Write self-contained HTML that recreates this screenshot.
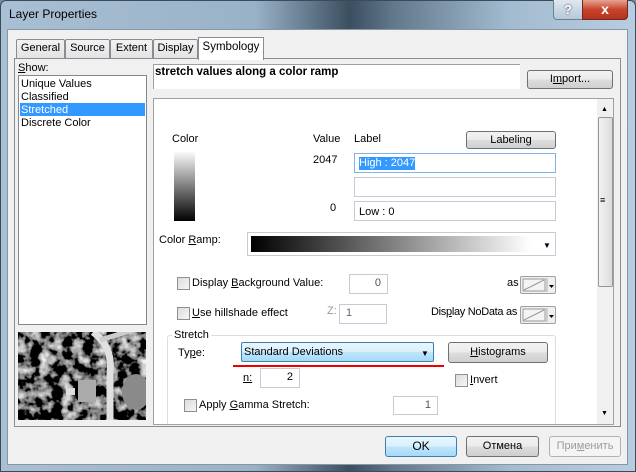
<!DOCTYPE html><html><head><meta charset="utf-8"><style>
*{box-sizing:border-box;margin:0;padding:0}
body{width:636px;height:472px;overflow:hidden;font-family:"Liberation Sans",sans-serif;font-size:11px;color:#000;position:relative;background:#7a8c9c}
.a{position:absolute}
.t{position:absolute;white-space:nowrap;line-height:13px}
.btn{position:absolute;border:1px solid #707070;border-radius:3px;background:linear-gradient(#f2f2f2 0,#ebebeb 50%,#dddddd 51%,#cfcfcf 100%);text-align:center;line-height:17px}
.in{position:absolute;border:1px solid #c5ccd6;background:#fff;text-align:right;padding-right:6px;line-height:17px}
.cb{position:absolute;width:13px;height:13px;border:1px solid #8f8f8f;background:linear-gradient(135deg,#dcdcdc,#f6f6f6)}
.dd{position:absolute;border:1px solid #a0a0a0;background:#f0f0f0;border-radius:2px}
u{text-decoration:underline}
</style></head><body>
<div class="a" style="left:0;top:0;width:636px;height:472px;border-radius:6px 6px 0 0;background:linear-gradient(90deg,#a8bfd4 0%,#9ab2c8 40%,#3b4f60 55%,#62798c 62%,#a3bbd0 80%,#b8cde0 100%);border:1px solid #3c4b58"></div>
<div class="t" style="left:9px;top:8px;font-size:12px;color:#000">Layer Properties</div>
<div class="a" style="left:553px;top:0;width:30px;height:20px;border:1px solid #6b7f93;border-top:0;border-radius:0 0 0 4px;background:linear-gradient(#dfe8f1,#b6c8d9);color:#fff;text-align:center;font-weight:bold;font-size:13px;line-height:19px;text-shadow:0 0 2px #334">?</div>
<div class="a" style="left:582px;top:0;width:46px;height:20px;border:1px solid #6b2a22;border-top:0;border-radius:0 0 4px 0;background:linear-gradient(#e8a493,#c7442c 50%,#b8321a);color:#fff;text-align:center;font-weight:bold;font-size:14px;line-height:19px">x</div>
<div class="a" style="left:7px;top:29px;width:621px;height:436px;background:#f0f0f0;border:1px solid #8797a6"></div>
<div class="a" style="left:14px;top:58px;width:607px;height:369px;border:1px solid #898c95;background:#fff"></div>
<div class="a" style="left:15px;top:59px;width:605px;height:367px;background:#f0f0f0"></div>
<div class="btn" style="left:16px;top:39px;width:49px;height:20px;border-radius:2px 2px 0 0;border-color:#898c95;background:linear-gradient(#f2f2f2,#e3e3e3)">General</div>
<div class="btn" style="left:65px;top:39px;width:45px;height:20px;border-radius:2px 2px 0 0;border-color:#898c95;background:linear-gradient(#f2f2f2,#e3e3e3)">Source</div>
<div class="btn" style="left:110px;top:39px;width:43px;height:20px;border-radius:2px 2px 0 0;border-color:#898c95;background:linear-gradient(#f2f2f2,#e3e3e3)">Extent</div>
<div class="btn" style="left:153px;top:39px;width:45px;height:20px;border-radius:2px 2px 0 0;border-color:#898c95;background:linear-gradient(#f2f2f2,#e3e3e3)">Display</div>
<div class="a" style="left:198px;top:37px;width:66px;height:23px;border:1px solid #898c95;border-bottom:0;background:#fff;text-align:center;line-height:18px;font-size:11.5px">Symbology</div>
<div class="t" style="left:18px;top:62px"><u>S</u>how:</div>
<div class="a" style="left:18px;top:75px;width:129px;height:250px;border:1px solid #828790;background:#fff"></div>
<div class="t" style="left:21px;top:78px">Unique Values</div>
<div class="t" style="left:21px;top:91px">Classified</div>
<div class="a" style="left:20px;top:103px;width:125px;height:13px;background:#3399ff"></div>
<div class="t" style="left:21px;top:104px;color:#fff">Stretched</div>
<div class="t" style="left:21px;top:117px">Discrete Color</div>
<svg class="a" style="left:18px;top:332px" width="128" height="88">
<defs><filter id="n" x="0" y="0" width="100%" height="100%"><feTurbulence type="fractalNoise" baseFrequency="0.09" numOctaves="3" seed="5"/><feColorMatrix type="saturate" values="0"/><feComponentTransfer><feFuncR type="linear" slope="3" intercept="-1.35"/><feFuncG type="linear" slope="3" intercept="-1.35"/><feFuncB type="linear" slope="3" intercept="-1.35"/><feFuncA type="linear" slope="0" intercept="1"/></feComponentTransfer></filter></defs>
<rect width="128" height="88" fill="#222"/>
<rect width="128" height="88" filter="url(#n)"/>
<ellipse cx="118" cy="60" rx="14" ry="18" fill="#8a8a8a"/>
<path d="M75 0 Q95 15 92 40 L92 88" stroke="#e0e0e0" stroke-width="7" fill="none"/>
<path d="M82 8 L115 -2" stroke="#ccc" stroke-width="5"/>
<rect x="60" y="48" width="18" height="22" fill="#aaa"/><rect x="48" y="56" width="9" height="7" fill="#ddd"/>
</svg>
<div class="a" style="left:153px;top:64px;width:367px;height:25px;border-top:1px solid #a0a0a0;border-left:1px solid #a0a0a0;background:#fff"></div>
<div class="t" style="left:155px;top:66px;font-weight:bold;font-size:11.5px">stretch values along a color ramp</div>
<div class="btn" style="left:527px;top:70px;width:86px;height:19px">I<u>m</u>port...</div>
<div class="a" style="left:153px;top:98px;width:461px;height:327px;border:1px solid #a0a0a0;background:#fff;overflow:hidden"></div>
<div class="a" style="left:167px;top:335px;width:389px;height:89px;border:1px solid #d5dfe5;border-bottom:0;border-radius:3px 3px 0 0"></div>
<div class="a" style="left:597px;top:99px;width:16px;height:325px;background:#f0f0f0"></div>
<div class="a" style="left:598px;top:117px;width:15px;height:170px;border:1px solid #979797;border-radius:2px;background:linear-gradient(90deg,#f2f2f2,#dcdcdc)"></div>
<div class="t" style="left:601px;top:103px;font-size:7px">▲</div>
<div class="t" style="left:601px;top:407px;font-size:7px">▼</div>
<div class="t" style="left:600px;top:194px;font-size:9px">≡</div>
<div class="t" style="left:172px;top:133px">Color</div>
<div class="a" style="left:174px;top:152px;width:21px;height:69px;background:linear-gradient(#fafafa,#000)"></div>
<div class="t" style="left:313px;top:133px">Value</div>
<div class="t" style="left:354px;top:133px">Label</div>
<div class="btn" style="left:466px;top:131px;width:90px;height:18px">Labeling</div>
<div class="t" style="left:313px;top:154px">2047</div>
<div class="a" style="left:354px;top:153px;width:202px;height:20px;border:1px solid #7eb4ea;background:#fff"></div>
<div class="t" style="left:359px;top:157px;background:#3399ff;color:#fff">High : 2047</div>
<div class="a" style="left:354px;top:177px;width:202px;height:20px;border:1px solid #c5ccd6"></div>
<div class="t" style="left:330px;top:202px">0</div>
<div class="a" style="left:354px;top:201px;width:202px;height:20px;border:1px solid #c5ccd6"></div>
<div class="t" style="left:359px;top:206px">Low : 0</div>
<div class="t" style="left:159px;top:234px">Color <u>R</u>amp:</div>
<div class="a" style="left:247px;top:232px;width:309px;height:24px;border:1px solid #c5ccd6;background:#fff"></div>
<div class="a" style="left:251px;top:236px;width:280px;height:16px;background:linear-gradient(90deg,#000,#fff)"></div>
<div class="t" style="left:543px;top:239px;font-size:8px">▼</div>
<div class="cb" style="left:177px;top:277px"></div>
<div class="t" style="left:192px;top:277px">Display <u>B</u>ackground Value:</div>
<div class="in" style="left:349px;top:274px;width:39px;height:20px;color:#555">0</div>
<div class="t" style="left:507px;top:277px">as</div>
<div class="dd" style="left:520px;top:276px;width:36px;height:18px"><svg width="34" height="16"><rect x="2" y="2" width="22" height="12" fill="#f4f4f4" stroke="#999"/><path d="M3 13 L23 3" stroke="#999"/><path d="M26 1V15" stroke="#aaa"/><path d="M28 8h5l-2.5 3z" fill="#000"/></svg></div>
<div class="cb" style="left:177px;top:307px"></div>
<div class="t" style="left:192px;top:307px"><u>U</u>se hillshade effect</div>
<div class="t" style="left:327px;top:305px;color:#999">Z:</div>
<div class="in" style="left:339px;top:304px;width:48px;height:20px;text-align:left;padding-left:6px;color:#666">1</div>
<div class="t" style="left:431px;top:306px;letter-spacing:-0.3px">Dis<u>p</u>lay NoData as</div>
<div class="dd" style="left:520px;top:306px;width:36px;height:18px"><svg width="34" height="16"><rect x="2" y="2" width="22" height="12" fill="#f4f4f4" stroke="#999"/><path d="M3 13 L23 3" stroke="#999"/><path d="M26 1V15" stroke="#aaa"/><path d="M28 8h5l-2.5 3z" fill="#000"/></svg></div>
<div class="t" style="left:172px;top:329px;background:#fff;padding:0 2px">Stretch</div>
<div class="t" style="left:178px;top:347px">Ty<u>p</u>e:</div>
<div class="a" style="left:241px;top:342px;width:193px;height:20px;border:1px solid #3c7fb1;border-radius:2px;background:linear-gradient(#eaf6fd,#d9f0fc 50%,#bee6fd 51%,#a7d9f5)"></div>
<div class="t" style="left:244px;top:346px">Standard Deviations</div>
<div class="t" style="left:421px;top:347px;font-size:8px">▼</div>
<div class="btn" style="left:448px;top:342px;width:100px;height:21px;line-height:19px"><u>H</u>istograms</div>
<div class="a" style="left:233px;top:365px;width:211px;height:2px;background:#e00"></div>
<div class="t" style="left:243px;top:372px"><u>n:</u></div>
<div class="in" style="left:260px;top:368px;width:40px;height:20px;color:#000">2</div>
<div class="cb" style="left:455px;top:374px"></div>
<div class="t" style="left:470px;top:374px"><u>I</u>nvert</div>
<div class="cb" style="left:184px;top:399px"></div>
<div class="t" style="left:199px;top:399px">Apply <u>G</u>amma Stretch:</div>
<div class="in" style="left:393px;top:396px;width:45px;height:19px;color:#555">1</div>
<div class="btn" style="left:385px;top:436px;width:72px;height:21px;line-height:19px;border-color:#3c7fb1;background:linear-gradient(#eaf6fd,#d9f0fc 50%,#bee6fd 51%,#a7d9f5);font-size:12px">OK</div>
<div class="btn" style="left:466px;top:436px;width:73px;height:21px;line-height:19px">Отмена</div>
<div class="btn" style="left:549px;top:436px;width:72px;height:21px;line-height:19px;border-color:#adb2b5;background:#f4f4f4;color:#9a9a9a">При<u>м</u>енить</div>
</body></html>
